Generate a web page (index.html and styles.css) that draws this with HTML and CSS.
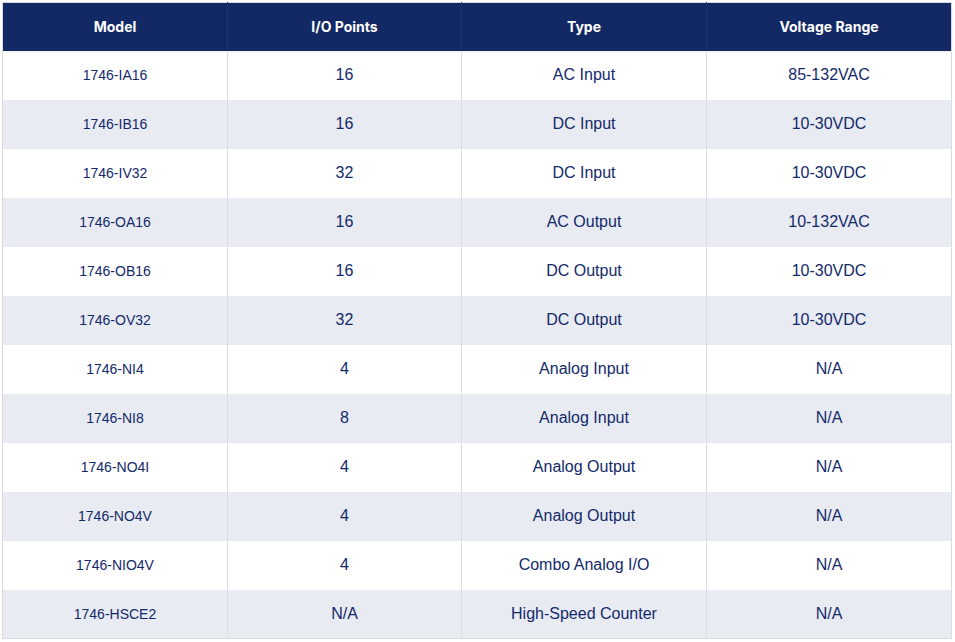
FILE: index.html
```html
<!DOCTYPE html>
<html>
<head>
<meta charset="utf-8">
<link rel="stylesheet" href="styles.css">
</head>
<body>
<table class="spec">
  <colgroup>
    <col class="c1"><col class="c2"><col class="c3"><col class="c4">
  </colgroup>
  <thead>
    <tr><th>Model</th><th>I/O Points</th><th>Type</th><th>Voltage Range</th></tr>
  </thead>
  <tbody>
    <tr><td class="model">1746-IA16</td><td>16</td><td>AC Input</td><td>85-132VAC</td></tr>
    <tr><td class="model">1746-IB16</td><td>16</td><td>DC Input</td><td>10-30VDC</td></tr>
    <tr><td class="model">1746-IV32</td><td>32</td><td>DC Input</td><td>10-30VDC</td></tr>
    <tr><td class="model">1746-OA16</td><td>16</td><td>AC Output</td><td>10-132VAC</td></tr>
    <tr><td class="model">1746-OB16</td><td>16</td><td>DC Output</td><td>10-30VDC</td></tr>
    <tr><td class="model">1746-OV32</td><td>32</td><td>DC Output</td><td>10-30VDC</td></tr>
    <tr><td class="model">1746-NI4</td><td>4</td><td>Analog Input</td><td>N/A</td></tr>
    <tr><td class="model">1746-NI8</td><td>8</td><td>Analog Input</td><td>N/A</td></tr>
    <tr><td class="model">1746-NO4I</td><td>4</td><td>Analog Output</td><td>N/A</td></tr>
    <tr><td class="model">1746-NO4V</td><td>4</td><td>Analog Output</td><td>N/A</td></tr>
    <tr><td class="model">1746-NIO4V</td><td>4</td><td>Combo Analog I/O</td><td>N/A</td></tr>
    <tr><td class="model">1746-HSCE2</td><td>N/A</td><td>High-Speed Counter</td><td>N/A</td></tr>
  </tbody>
</table>
</body>
</html>
```
FILE: styles.css
```css
html, body {
  margin: 0;
  padding: 0;
  background: #ffffff;
}
body {
  padding: 2px;
}
.spec {
  width: 950px;
  table-layout: fixed;
  border-collapse: collapse;
  border: 1px solid #d9d9de;
  color: #13296a;
  font-family: "Liberation Sans", Arial, sans-serif;
}
.c1 { width: 225px; }
.c2 { width: 234px; }
.c3 { width: 245px; }
.c4 { width: 245px; }
.spec thead tr {
  background: #132966;
  height: 48px;
  box-shadow: 0 1px 2px rgba(0, 0, 0, 0.08);
}
.spec th {
  color: #ffffff;
  font-family: "Inter", "Open Sans", sans-serif;
  font-weight: 700;
  font-size: 14px;
  text-align: center;
  padding: 0;
  border-left: 1px solid #1f3474;
}
.spec th:first-child { border-left: none; }
.spec tbody tr {
  height: 49px;
}
.spec tbody tr:nth-child(even) {
  background: #e8ebf2;
}
.spec td {
  text-align: center;
  font-size: 16px;
  padding: 0;
  border-left: 1px solid #dcdde2;
}
.spec td:first-child { border-left: none; }
.spec td.model {
  font-size: 14px;
}
```
